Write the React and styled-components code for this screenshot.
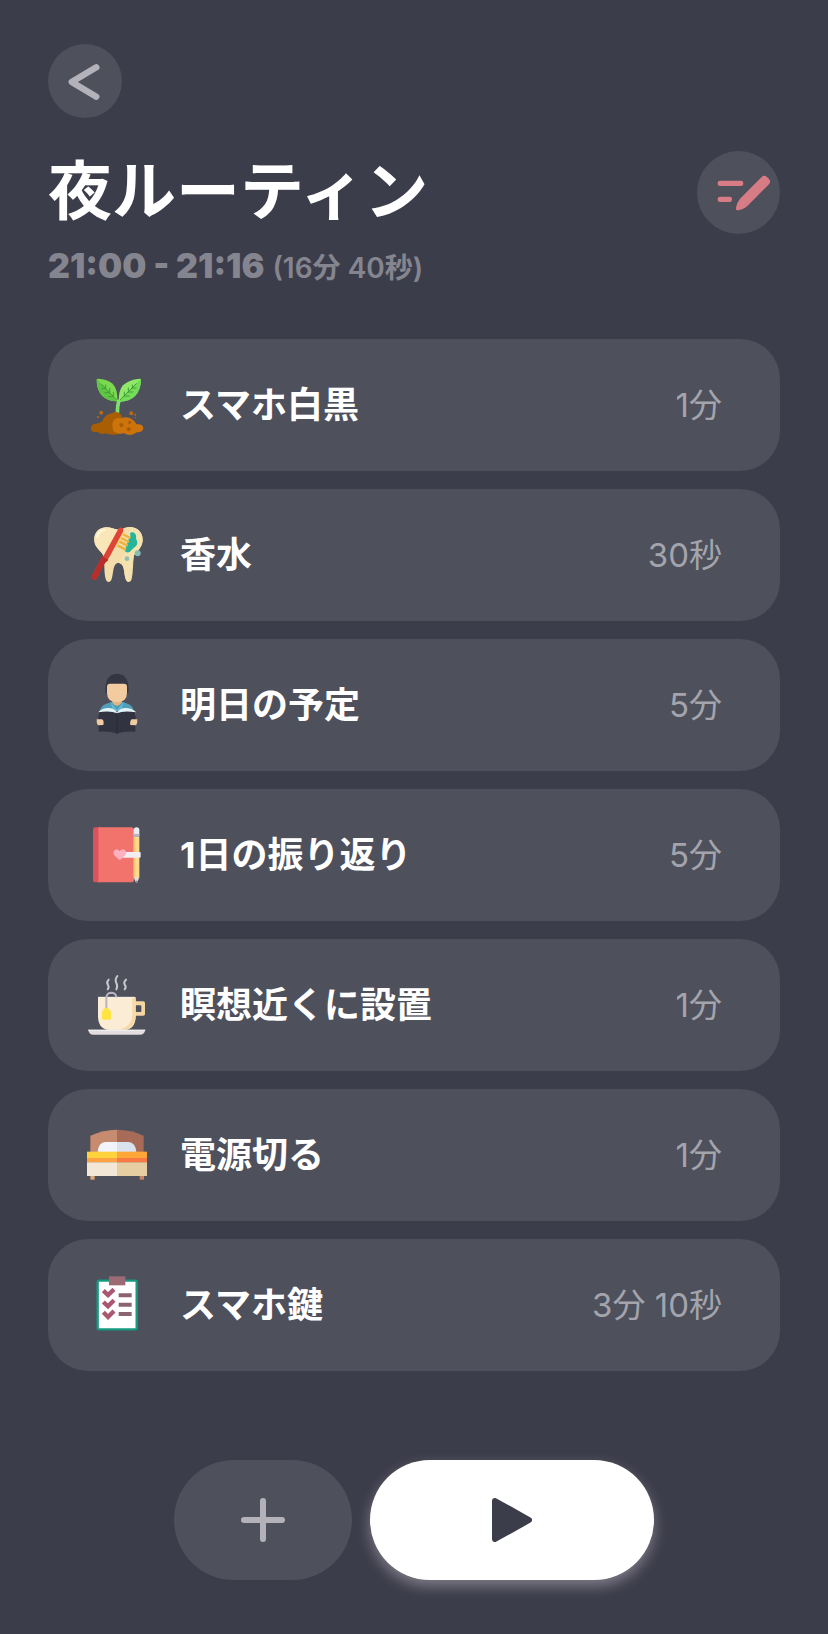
import React from 'react';
import styled, { createGlobalStyle } from 'styled-components';

const colors = {
	background: '#3c3d4a',
	surface: '#4e505c',
	muted: '#85858f',
	duration: '#a3a4ac',
	icon: '#b3b2ba',
	accent: '#d77b85',
	white: '#ffffff'
};

const GlobalStyle = createGlobalStyle`
	* {
		box-sizing: border-box;
	}
	body {
		margin: 0;
		min-height: 100vh;
		background-color: ${colors.background};
		font-family: Inter, 'Noto Sans CJK JP', sans-serif;
		color: ${colors.white};
	}
`;

const Page = styled.main`
	display: flex;
	flex-direction: column;
	padding: 44px 48px 54px;
`;

const RoundButton = styled.button`
	display: flex;
	flex-shrink: 0;
	width: ${props => props.$size}px;
	height: ${props => props.$size}px;
	padding: 0;
	border: none;
	border-radius: 50%;
	background-color: ${colors.surface};
	cursor: pointer;
	svg {
		width: 100%;
		height: 100%;
	}
`;

const TitleRow = styled.div`
	display: flex;
	align-items: flex-start;
	justify-content: space-between;
	margin-top: 33px;
`;

const Title = styled.h1`
	margin: 0;
	font-family: 'Noto Sans CJK JP', sans-serif;
	font-size: 64px;
	line-height: 70px;
	font-weight: 700;
`;

const Schedule = styled.p`
	display: flex;
	align-items: baseline;
	gap: 8px;
	height: 44px;
	margin: 10px 0 0;
	line-height: 44px;
	color: ${colors.muted};
`;

const TimeRange = styled.span`
	font-size: 34px;
	font-weight: 900;
`;

const Total = styled.span`
	font-size: 28px;
	font-weight: 600;
`;

const TaskList = styled.ul`
	display: flex;
	flex-direction: column;
	gap: 18px;
	margin: 51px 0 0;
	padding: 0;
	list-style: none;
`;

const TaskCard = styled.li`
	display: flex;
	align-items: center;
	height: 132px;
	padding: 0 58px 0 32px;
	border-radius: 40px;
	background-color: ${colors.surface};
`;

const TaskIcon = styled.svg`
	flex-shrink: 0;
	width: 80px;
	height: 90px;
	margin-right: 20px;
`;

const TaskName = styled.span`
	flex: 1;
	font-size: 36px;
	line-height: 48px;
	font-weight: 700;
`;

const Duration = styled.span`
	font-size: 33px;
	line-height: 48px;
	font-weight: 400;
	color: ${colors.duration};
`;

const Actions = styled.div`
	display: flex;
	justify-content: center;
	gap: 18px;
	margin-top: 89px;
`;

const ActionButton = styled.button`
	display: flex;
	align-items: center;
	justify-content: center;
	width: ${props => (props.$primary ? 284 : 178)}px;
	height: 120px;
	padding: 0;
	border: none;
	border-radius: 60px;
	background-color: ${props => (props.$primary ? colors.white : colors.surface)};
	box-shadow: ${props => (props.$primary ? '0 6px 14px rgba(255, 240, 255, 0.35)' : 'none')};
	cursor: pointer;
`;

const Sprout = () => (
	<>
		<path d="M112 160 Q112 138 117 119" stroke="#7fe070" strokeWidth="11" fill="none" />
		<path d="M50 59 Q50 56 54 56 Q82 57 98 71 Q114 88 112 124 Q86 125 67 108 Q50 90 50 59Z" fill="#7ad950" />
		<path d="M51 57 L112 124 Q86 125 67 108 Q50 90 50 59Z" fill="#5fc544" />
		<path d="M183 59 Q183 56 178 56 Q146 59 129 76 Q115 92 116 125 Q147 126 165 108 Q182 90 183 59Z" fill="#90e868" />
		<path d="M182 57 L116 125 Q147 126 165 108 Q182 90 183 59Z" fill="#74dc5a" />
		<g stroke="#409f34" strokeWidth="3" fill="none" strokeLinecap="round">
			<path d="M65 73 L109 119 M77 86 V75 M77 86 H66 M89 98 V85 M89 98 H75 M100 110 V97 M100 110 H86" />
			<path d="M169 71 L121 119 M157 84 V75 M157 84 H168 M145 96 V84 M145 96 H159 M133 108 V96 M133 108 H148" />
		</g>
		<path d="M33 205 Q33 192 46 192 Q57 191 67 183 Q75 163 96 160 Q102 154 113 157 Q121 160 126 168 L124 218 Q101 230 78 220 Q63 226 54 216 Q33 220 33 205Z" fill="#a95e03" />
		<path d="M97 195 Q99 169 122 175 Q145 166 159 180 Q167 186 169 193 Q188 190 190 204 Q188 218 171 217 Q151 231 133 220 Q109 225 99 211Z" fill="#cc740b" />
		<g fill="#a85c05">
			<circle cx="124" cy="195" r="6" />
			<circle cx="146" cy="208" r="6" />
			<circle cx="149" cy="187" r="5" />
		</g>
		<g fill="#b96a17">
			<circle cx="64" cy="158" r="6" />
			<circle cx="54" cy="171" r="3" />
			<circle cx="154" cy="160" r="6" />
			<circle cx="166" cy="164" r="3" />
			<circle cx="166" cy="173" r="2" />
		</g>
	</>
);

const Toothbrush = () => (
	<>
		<path d="M43 91 C41 67 59 51 82 52 C98 53 104 59 115 59 C128 58 134 51 149 51 C172 51 188 67 188 89 C188 109 174 122 162 136 C158 164 160 188 155 207 C152 219 140 218 137 207 C131 188 135 160 115 158 C98 160 101 188 95 207 C91 220 80 218 77 207 C71 184 75 158 70 137 C62 121 44 114 43 91Z" fill="#f2ddab" />
		<path d="M43 91 C41 67 59 51 82 52 C98 53 104 59 115 59 Q105 86 72 137 C62 121 44 114 43 91Z" fill="#fae7b9" />
		<path d="M149 51 C172 51 188 67 188 89 C188 109 174 122 162 136 Q153 170 145 216 Q138 213 137 207 C131 188 135 160 115 158 Q136 137 143 103Z" fill="#f5e2af" />
		<path d="M51 80 Q55 69 65 62 M70 60 H73" fill="none" stroke="#fff9df" strokeWidth="6" strokeLinecap="round" />
		<path d="M150 70 Q154 65 163 68 Q170 74 168 86 Q176 99 168 108 Q157 117 149 126 Q139 130 134 122 L146 88 Q154 84 150 70Z" fill="#24b69b" />
		<g stroke="#eeb33d" strokeWidth="7">
			<path d="M127 72 L151 84 M122 83 L147 96 M117 94 L143 107 M112 106 L138 119" />
		</g>
		<path d="M129 65 L108 107" stroke="#f8d671" strokeWidth="8" />
		<path d="M116 55 Q122 50 130 56 L129 65 L88 142 Q78 153 69 168 L51 204 Q47 213 39 208 Q32 203 37 195 L57 157 Q69 144 72 135Z" fill="#df4536" />
		<path d="M65 137 L86 149 Q75 157 69 168 L51 204 Q47 213 39 208 Q32 203 37 195 L57 157Z" fill="#b82e2b" />
		<circle cx="173" cy="130" r="9" fill="#83beb5" />
		<circle cx="141" cy="146" r="7" fill="#91beb1" />
	</>
);

const Reader = () => (
	<>
		<path d="M77 99 Q72 42 111 41 Q150 42 145 99Z" fill="#363642" />
		<path d="M60 154 Q61 138 79 131 L96 125 H126 L143 131 Q160 138 161 154Z" fill="#4f9eba" />
		<path d="M92 126 L111 150 L131 126 L125 147 L111 154 L97 147Z" fill="#68b8d0" />
		<path d="M97 112 H125 V128 Q111 147 97 128Z" fill="#dfb685" />
		<path d="M81 80 Q81 71 90 71 H132 Q141 71 141 80 V98 Q141 126 111 126 Q81 126 81 98Z" fill="#f2cca0" />
		<path d="M56 155 Q70 142 88 144 Q105 146 111 158 Q118 146 134 144 Q151 142 166 154 L167 166 H56Z" fill="#e1f3f4" />
		<path d="M55 157 Q91 151 111 160 Q131 151 167 157 L166 215 Q132 213 111 221 Q91 213 56 215Z" fill="#313440" />
		<path d="M111 160 V221" stroke="#252831" strokeWidth="2" />
		<path d="M50 178 H66 Q73 182 70 195 L54 196 Q49 190 50 178Z M172 178 H155 Q149 183 151 195 L168 196 Q173 190 172 178Z" fill="#f0cca2" />
	</>
);

const Notebook = () => (
	<>
		<rect x="39" y="52" width="26" height="165" rx="6" fill="#d9535e" />
		<path d="M55 52 H154 Q162 52 162 60 V209 Q162 217 154 217 H55Z" fill="#f1736b" />
		<path d="M161 61 Q161 52 170 52 Q178 52 178 61 V77 H161Z" fill="#eaeaf3" />
		<path d="M161 72 H178 V81 H161Z" fill="#b4b5c2" />
		<path d="M161 81 H178 V202 L170 209 L161 202Z" fill="#ffda8b" />
		<path d="M161 81 H166 V205 L161 202Z" fill="#f4c66f" />
		<path d="M161 202 H178 L172 217 Q169 221 167 216Z" fill="#e6d9d0" />
		<path d="M167 212 H173 L170 220Z" fill="#747985" />
		<rect x="126" y="126" width="56" height="17" rx="3" fill="#f2edf2" />
		<path d="M119 151 L104 137 Q97 128 104 120 Q112 114 119 124 Q127 114 135 120 Q142 129 134 138Z" fill="#ffb0c1" />
	</>
);

const TeaCup = () => (
	<>
		<path d="M83 88 Q88 82 84 75 Q78 67 86 59 M109 88 Q114 78 109 69 Q104 59 112 48 M134 88 Q140 81 134 74 Q130 66 138 59" fill="none" stroke="#c9c7d0" strokeWidth="6" strokeLinecap="round" />
		<path d="M163 124 H190 Q195 124 195 129 V162 Q195 167 190 167 H160 V156 H181 Q184 156 184 153 V139 Q184 136 181 136 H163Z" fill="#f5d5a1" />
		<path d="M56 112 H164 Q167 112 167 116 V168 Q167 211 127 211 H95 Q54 211 54 168 V116 Q54 112 56 112Z" fill="#faecd5" />
		<path d="M157 112 H167 V168 Q167 207 127 211 H112 Q157 201 157 163Z" fill="#f7d8a8" />
		<path d="M54 112 H164" stroke="#fff8e9" strokeWidth="3" />
		<path d="M79 150 V111 Q81 98 95 98 Q108 99 109 112" fill="none" stroke="#b7b4bf" strokeWidth="6" />
		<path d="M72 146 Q79 140 86 146 L93 155 V175 Q93 179 89 179 H70 Q66 179 66 175 V155Z" fill="#ffe341" />
		<path d="M25 209 H196 Q193 224 180 224 H40 Q27 224 25 209Z" fill="#e1dde1" />
		<path d="M25 209 H196 L195 213 H25Z" fill="#f0edef" />
	</>
);

const Bed = () => (
	<>
		<path d="M31 126 V77 Q70 59 111 59 V126Z" fill="#c78b6f" />
		<path d="M111 59 Q154 59 191 77 V126 H111Z" fill="#a86b57" />
		<path d="M53 126 Q55 98 76 96 H111 V126Z" fill="#f1f4fa" />
		<path d="M111 96 H145 Q167 98 169 126 H111Z" fill="#dae2ed" />
		<rect x="21" y="125" width="90" height="32" fill="#ffd33d" />
		<rect x="111" y="125" width="90" height="32" fill="#ffa639" />
		<rect x="21" y="144" width="90" height="13" fill="#ffa145" />
		<rect x="111" y="144" width="90" height="13" fill="#f97943" />
		<rect x="21" y="157" width="90" height="41" fill="#f3e8d7" />
		<rect x="111" y="157" width="90" height="41" fill="#e6cda2" />
		<path d="M31 198 H44 V209 H31Z" fill="#e0a67b" />
		<path d="M179 198 H192 V209 H179Z" fill="#c98361" />
	</>
);

const Checklist = () => (
	<>
		<rect x="53" y="62" width="117" height="146" rx="3" fill="#ffffff" stroke="#169a80" strokeWidth="7" />
		<path d="M87 49 H136 V76 H87Z" fill="#9c6a75" />
		<g fill="none" stroke="#aa5870" strokeWidth="13">
			<path d="M70 92 L84 105 L102 88 M70 126 L84 139 L102 121 M70 157 L84 171 L102 153" />
		</g>
		<path d="M116 106 H155 M116 134 H155 M116 162 H155" stroke="#8b6470" strokeWidth="12" />
	</>
);

const tasks = [
	{ name: 'スマホ白黒', duration: '1分', Icon: Sprout },
	{ name: '香水', duration: '30秒', Icon: Toothbrush },
	{ name: '明日の予定', duration: '5分', Icon: Reader },
	{ name: '1日の振り返り', duration: '5分', Icon: Notebook },
	{ name: '瞑想近くに設置', duration: '1分', Icon: TeaCup },
	{ name: '電源切る', duration: '1分', Icon: Bed },
	{ name: 'スマホ鍵', duration: '3分 10秒', Icon: Checklist }
];

const Task = ({ name, duration, Icon }) => (
	<TaskCard>
		<TaskIcon viewBox="0 0 240 270" aria-hidden="true">
			<Icon />
		</TaskIcon>
		<TaskName>{name}</TaskName>
		<Duration>{duration}</Duration>
	</TaskCard>
);

const App = () => (
	<Page lang="ja">
		<GlobalStyle />
		<RoundButton $size={74} aria-label="戻る">
			<svg viewBox="0 0 222 222" fill="none" stroke={colors.icon} strokeWidth="19" strokeLinecap="round" strokeLinejoin="round">
				<path d="M145 70 L71 114 L145 158" />
			</svg>
		</RoundButton>
		<TitleRow>
			<Title>夜ルーティン</Title>
			<RoundButton $size={83} aria-label="編集">
				<svg viewBox="0 0 249 249" fill={colors.accent}>
					<rect x="62" y="89" width="77" height="16" rx="7" />
					<rect x="62" y="137" width="43" height="16" rx="7" />
					<path d="M194 78 Q202 71 210 78 L216 84 Q223 92 216 100 L151 165 Q143 173 124 178 Q115 179 117 170 Q121 152 129 143Z" />
				</svg>
			</RoundButton>
		</TitleRow>
		<Schedule>
			<TimeRange>21:00 - 21:16</TimeRange>
			<Total>(16分 40秒)</Total>
		</Schedule>
		<TaskList>
			{tasks.map(task => (
				<Task key={task.name} {...task} />
			))}
		</TaskList>
		<Actions>
			<ActionButton aria-label="追加">
				<svg width="44" height="44" viewBox="0 0 44 44" stroke={colors.icon} strokeWidth="6" strokeLinecap="round">
					<path d="M3 22 H41 M22 3 V41" />
				</svg>
			</ActionButton>
			<ActionButton $primary aria-label="開始">
				<svg width="40" height="44" viewBox="0 0 40 44" fill={colors.background} stroke={colors.background} strokeWidth="6" strokeLinejoin="round">
					<path d="M3 3 L37 22 L3 41Z" />
				</svg>
			</ActionButton>
		</Actions>
	</Page>
);

export default App;
